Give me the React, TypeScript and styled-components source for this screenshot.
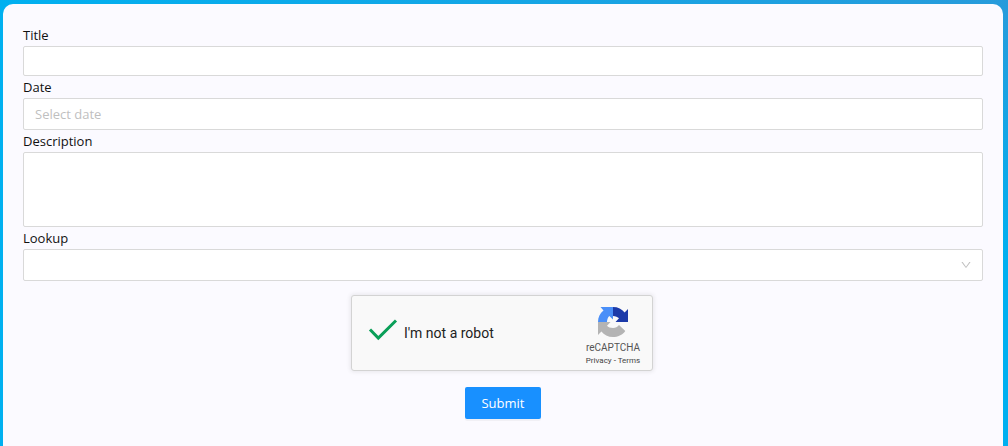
import React from "react";
import styled, { createGlobalStyle } from "styled-components";

const GlobalStyle = createGlobalStyle`
  * { box-sizing: border-box; }
  body {
    margin: 0;
    min-height: 100vh;
    padding: 4px 5px 0 3px;
    font-family: "Open Sans", "Noto Sans", sans-serif;
    font-size: 13px;
    line-height: 22px;
    color: #111;
    background: radial-gradient(ellipse 100% 260px at 100% 0, #279bdb, #00b0f0) no-repeat #00b0f0;
  }
`;

const Card = styled.main`
  min-height: calc(100vh - 4px);
  padding: 20px;
  border-radius: 10px 10px 0 0;
  background: #fbfaff;
`;

const Form = styled.form`
  display: flex;
  flex-direction: column;
`;

const Field = styled.label`
  display: flex;
  flex-direction: column;
`;

const controlStyle = `
  width: 100%;
  margin: 0;
  padding: 4px 11px;
  border: 1px solid #d9d9d9;
  border-radius: 2px;
  outline: none;
  background: #fff;
  color: inherit;
  font: inherit;
`;

const TextInput = styled.input<{ $height: number }>`
  ${controlStyle}
  height: ${(p) => p.$height}px;
  &::placeholder { color: #bfbfbf; opacity: 1; }
`;

const TextArea = styled.textarea`
  ${controlStyle}
  height: 75px;
  resize: none;
`;

const SelectBox = styled.span`
  display: grid;
  align-items: center;
  > * { grid-area: 1 / 1; }
`;

const Select = styled.select`
  ${controlStyle}
  height: 32px;
  appearance: none;
`;

const Chevron = styled.svg`
  justify-self: end;
  margin-right: 11px;
  pointer-events: none;
`;

const CaptchaFrame = styled.div`
  align-self: center;
  width: 304px;
  margin: 14px 0 16px;
`;

const Captcha = styled.div`
  display: flex;
  width: 302px;
  height: 76px;
  border: 1px solid #d3d3d3;
  border-radius: 3px;
  background: #f9f9f9;
  box-shadow: 0 0 4px 1px rgba(0, 0, 0, 0.08);
  font-family: Roboto, sans-serif;
  color: #222;
`;

const CheckLabel = styled.label`
  display: flex;
  flex: 1;
  align-items: center;
  gap: 6px;
  padding-left: 16px;
  font-size: 14px;
`;

const CheckBox = styled.input`
  appearance: none;
  width: 30px;
  height: 30px;
  margin: 0;
`;

const CheckMark = styled.span`
  display: grid;
  > * { grid-area: 1 / 1; }
  svg { pointer-events: none; visibility: hidden; }
  input:checked + svg { visibility: visible; }
`;

const Brand = styled.div`
  display: flex;
  flex-direction: column;
  align-items: center;
  width: 58px;
  margin-right: 10px;
  padding-top: 11px;
  color: #555;
  font-size: 10px;
  line-height: 12px;
  white-space: nowrap;
`;

const BrandName = styled.span`
  margin-top: 5px;
`;

const Links = styled.span`
  margin-top: 1px;
  font-size: 8px;
  color: #222;
`;

const Link = styled.a`
  color: #444;
  text-decoration: none;
`;

const Submit = styled.button`
  align-self: center;
  width: 76px;
  height: 32px;
  padding: 0;
  border: 0;
  border-radius: 2px;
  background: #1890ff;
  box-shadow: 0 2px 0 rgba(0, 0, 0, 0.04);
  color: #fff;
  font: inherit;
`;

export default function App() {
  return (
    <>
      <GlobalStyle />
      <Card>
        <Form onSubmit={(e) => e.preventDefault()}>
          <Field>
            Title
            <TextInput $height={30} type="text" />
          </Field>
          <Field>
            Date
            <TextInput $height={32} type="text" placeholder="Select date" />
          </Field>
          <Field>
            Description
            <TextArea />
          </Field>
          <Field>
            Lookup
            <SelectBox>
              <Select defaultValue="">
                <option value="" />
              </Select>
              <Chevron width="12" height="12" viewBox="0 0 1024 1024" fill="#bfbfbf" aria-hidden="true">
                <path d="M884 256h-75c-5.100 0-9.900 2.500-12.900 6.600L512 654.200 227.900 262.600c-3-4.100-7.800-6.600-12.900-6.600h-75c-6.500 0-10.300 7.400-6.500 12.700l352.600 486.100c12.800 17.600 39 17.600 51.700 0l352.600-486.100c3.900-5.300.1-12.700-6.400-12.700z" />
              </Chevron>
            </SelectBox>
          </Field>
          <CaptchaFrame>
            <Captcha>
              <CheckLabel>
                <CheckMark>
                  <CheckBox type="checkbox" defaultChecked />
                  <svg width="30" height="30" viewBox="0 0 30 30" fill="none" stroke="#0a9f58" strokeWidth="3" aria-hidden="true">
                    <path d="M2 11.500L10.300 20L28 2.500" />
                  </svg>
                </CheckMark>
                I'm not a robot
              </CheckLabel>
              <Brand>
                <svg width="30" height="30" viewBox="0 0 30 30" aria-hidden="true">
                  <path fill="#1c3aa9" d="M15 0C20 0 24 2 26.600 5.500L30 2V15H17.500L21 11.300C19.800 10 17.500 9 15 9Z" />
                  <path fill="#4a8ff8" d="M0 15C0 10 2 6 5.500 3.400L2.500 0H15V12.500L11.300 9C10 10.200 9 12.500 9 15Z" />
                  <path fill="#b4b4b4" d="M15 30C10 30 6 28 3.400 24.500L0 28V15H12.500L9 18.700C10.200 20 12.500 21 15 21C17.500 21 19.500 20 21 18L27.300 24C24.500 28 19.500 30 15 30Z" />
                </svg>
                <BrandName>reCAPTCHA</BrandName>
                <Links>
                  <Link href="#privacy">Privacy</Link> - <Link href="#terms">Terms</Link>
                </Links>
              </Brand>
            </Captcha>
          </CaptchaFrame>
          <Submit type="submit">Submit</Submit>
        </Form>
      </Card>
    </>
  );
}
